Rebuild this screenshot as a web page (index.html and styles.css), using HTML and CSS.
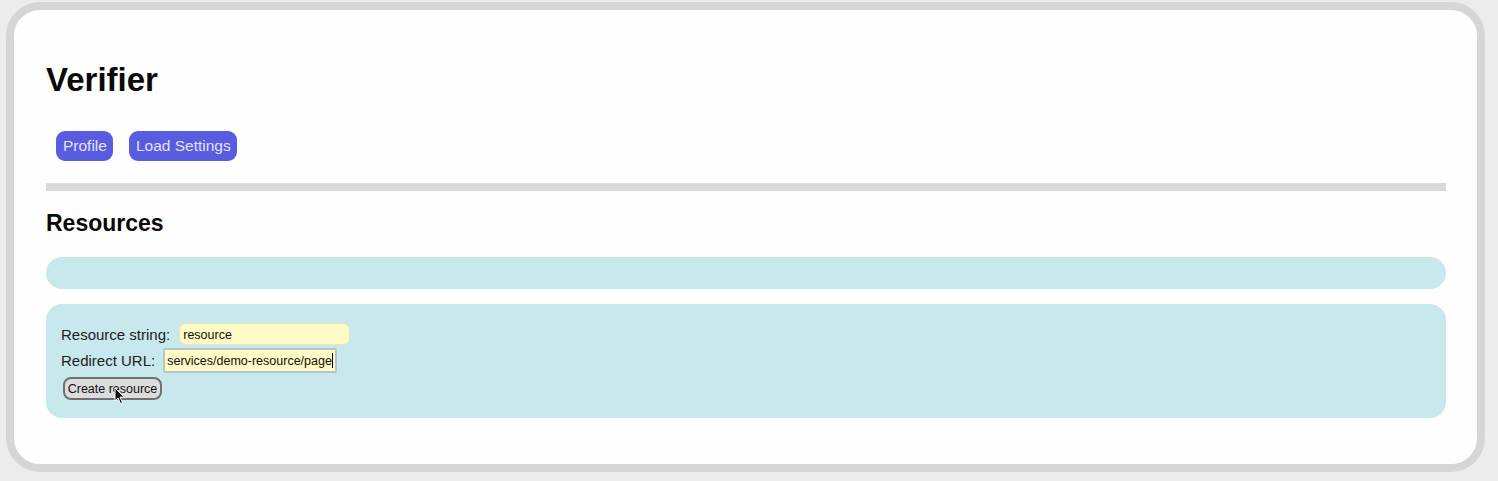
FILE: index.html
```html
<!DOCTYPE html>
<html lang="en">
<head>
<meta charset="utf-8">
<title>Verifier</title>
<link rel="stylesheet" href="styles.css">
</head>
<body>
<main class="card">
  <h1 class="title">Verifier</h1>
  <nav class="nav">
    <button class="pill">Profile</button>
    <button class="pill">Load Settings</button>
  </nav>
  <hr class="rule">
  <h2 class="section-title">Resources</h2>
  <div class="bar"></div>
  <form class="panel">
    <div class="row">
      <label class="label" for="res">Resource string:</label>
      <input class="field field-round" id="res" value="resource">
    </div>
    <div class="row">
      <label class="label">Redirect URL:</label>
      <div class="field field-focus" role="textbox">services/demo-resource/page<span class="caret"></span></div>
    </div>
    <div class="row">
      <span class="btn-wrap">
        <button type="button" class="create">Create resource</button>
        <svg class="cursor" width="12" height="18" viewBox="0 0 12 18"><path d="M1 1 L1 14 L4 11 L6.5 16.5 L8.5 15.6 L6 10.2 L10.2 10.2 Z" fill="#111" stroke="#fff" stroke-width="1"/></svg>
      </span>
    </div>
  </form>
</main>
</body>
</html>
```

FILE: styles.css
```css
html, body {
  margin: 0;
  padding: 0;
}
body {
  background: #ececec;
  font-family: "Liberation Sans", Arial, sans-serif;
  padding: 2px 0 0 6px;
  height: 481px;
  box-sizing: border-box;
  overflow: hidden;
}
.card {
  box-sizing: border-box;
  width: 1479px;
  height: 470px;
  border: 8px solid #d6d6d6;
  border-radius: 34px;
  background: #fefefe;
  padding: 52px 31px 0 32px;
}
.title {
  margin: 0;
  font-size: 33px;
  line-height: 36px;
  font-weight: bold;
  color: #0a0a0a;
}
.nav {
  display: flex;
  gap: 16px;
  margin-top: 33px;
  padding-left: 10px;
}
.pill {
  font-family: "Liberation Sans", Arial, sans-serif;
  font-size: 15.5px;
  line-height: 18px;
  height: 30px;
  padding: 0 6px 0 7px;
  border: none;
  border-radius: 9px;
  background: #585ce0;
  color: #e2e3fb;
}
.rule {
  margin: 22px 0 0;
  height: 8px;
  border: none;
  background: #d9d9d9;
}
.section-title {
  margin: 19px 0 0;
  font-size: 23px;
  line-height: 27px;
  font-weight: bold;
  color: #0a0a0a;
}
.bar {
  margin-top: 20px;
  height: 32px;
  border-radius: 16px;
  background: #c7e8ec;
}
.panel {
  margin: 15px 0 0;
  height: 114px;
  box-sizing: border-box;
  border-radius: 16px;
  background: #c7e8ec;
  padding: 19px 15px 0;
  display: flex;
  flex-direction: column;
  gap: 3px;
}
.row {
  display: flex;
  align-items: center;
  gap: 9px;
}
.label {
  font-size: 15px;
  color: #222;
}
.field {
  box-sizing: border-box;
  font-family: "Liberation Sans", Arial, sans-serif;
  font-size: 12.5px;
  color: #111;
  background: #fffac6;
  outline: none;
}
.field-round {
  width: 171px;
  height: 22px;
  border: 1px solid #ece6b4;
  border-radius: 7px;
  padding: 2px 3px 0;
}
.field-focus {
  width: 174px;
  height: 25px;
  border: 2px solid #b6c5c8;
  border-radius: 2px;
  padding: 1px 2px 0;
  line-height: 21px;
  white-space: nowrap;
  overflow: hidden;
  margin-left: -1px;
}
.caret {
  display: inline-block;
  width: 1px;
  height: 15px;
  background: #000;
  vertical-align: -3px;
}
.btn-wrap {
  position: relative;
  margin-top: 1px;
  margin-left: 2px;
}
.create {
  font-family: "Liberation Sans", Arial, sans-serif;
  font-size: 12.5px;
  color: #111;
  height: 23px;
  width: 99px;
  padding: 0;
  background: #dcdcdc;
  border: 2px solid #707070;
  border-radius: 8px;
}
.cursor {
  position: absolute;
  left: 51px;
  top: 10px;
}
```
